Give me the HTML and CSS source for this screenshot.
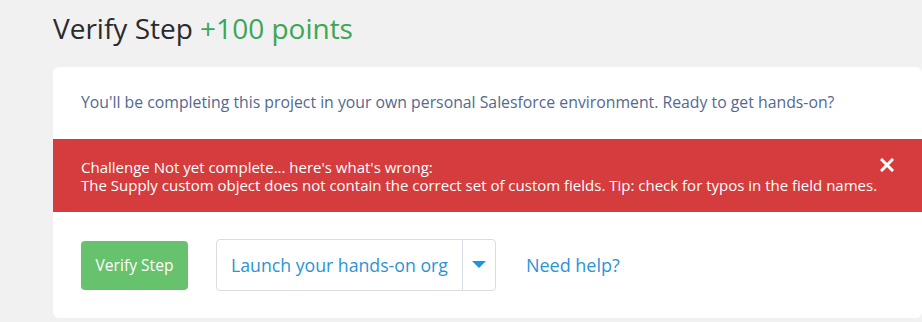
FILE: index.html
```html
<!DOCTYPE html>
<html lang="en">
<head>
    <meta charset="UTF-8">
    <meta name="viewport" content="width=device-width, initial-scale=1.0">
    <title>Verify Step</title>
    <link rel="stylesheet" href="styles.css">
</head>
<body>

    <div class="page">
        <h1 class="step-title">Verify Step <span class="points">+100 points</span></h1>

        <div class="card">
            <p class="intro">You'll be completing this project in your own personal Salesforce environment. Ready to get hands-on?</p>

            <div class="error-banner">
                <div class="error-text">
                    Challenge Not yet complete... here's what's wrong:<br>
                    The Supply custom object does not contain the correct set of custom fields. Tip: check for typos in the field names.
                </div>
                <button class="close-btn" aria-label="Close">
                    <svg width="14" height="14" viewBox="0 0 14 14">
                        <path d="M2 2 L12 12 M12 2 L2 12" stroke="#fff" stroke-width="3" stroke-linecap="square"/>
                    </svg>
                </button>
            </div>

            <div class="actions">
                <button class="verify-btn">Verify Step</button>
                <div class="launch">
                    <span class="launch-label">Launch your hands-on org</span>
                    <span class="launch-toggle">
                        <svg width="14" height="8" viewBox="0 0 14 8"><path d="M0 0 H14 L7 7 Z" fill="#1b96dc"/></svg>
                    </span>
                </div>
                <a class="help-link" href="#">Need help?</a>
            </div>
        </div>
    </div>

</body>
</html>
```

FILE: styles.css
```css
body {
    margin: 0;
    background: #f1f1f1;
    font-family: 'Open Sans', 'Noto Sans', sans-serif;
    overflow: hidden;
}
.page {
    padding: 11px 0 0 53px;
}
.step-title {
    margin: 0 0 21px;
    font-size: 28px;
    font-weight: 400;
    line-height: 35px;
    color: #2b2b2b;
}
.points {
    color: #3ba755;
}
.card {
    background: #fff;
    border-radius: 6px;
    padding-bottom: 27px;
}
.intro {
    margin: 0;
    padding: 25px 28px 27px;
    font-size: 15.8px;
    line-height: 20px;
    color: #54698d;
}
.error-banner {
    background: #d43c3d;
    color: #fff;
    display: flex;
    justify-content: space-between;
    align-items: flex-start;
    padding: 19px 28px 18px 28px;
    font-size: 15px;
    line-height: 18px;
}
.error-text {
    white-space: nowrap;
}
.close-btn {
    background: none;
    border: none;
    padding: 0;
    margin: 0;
    cursor: pointer;
    line-height: 0;
}
.actions {
    display: flex;
    align-items: center;
    gap: 28px;
    padding: 27px 28px 0;
}
.verify-btn {
    background: #67c26e;
    color: #fff;
    border: none;
    border-radius: 4px;
    font-family: inherit;
    font-size: 15.6px;
    width: 107px;
    height: 49px;
    cursor: pointer;
}
.launch {
    display: flex;
    border: 1px solid #d8dde6;
    border-radius: 4px;
    box-sizing: border-box;
    height: 52px;
}
.launch-label {
    display: flex;
    align-items: center;
    padding: 0 14px 0 14px;
    font-size: 17.7px;
    color: #2a94d6;
    border-right: 1px solid #d8dde6;
}
.launch-toggle {
    display: flex;
    align-items: center;
    justify-content: center;
    width: 32px;
}
.help-link {
    font-size: 18px;
    color: #2a94d6;
    text-decoration: none;
    margin-left: 2px;
}
```
